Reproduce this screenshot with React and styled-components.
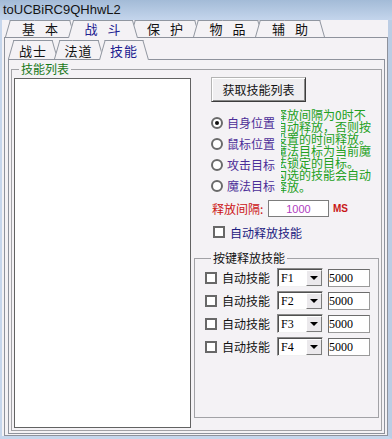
import React from 'react';
import styled, { createGlobalStyle } from 'styled-components';

const GlobalStyle = createGlobalStyle`
  html, body {
    margin: 0;
    padding: 0;
    background: #f4f2f5;
  }
  body {
    font-family: "Noto Sans CJK SC", "Liberation Sans", sans-serif;
    font-size: 12px;
  }
`;

const Window = styled.div`
  width: 392px;
  height: 439px;
  display: flex;
  flex-direction: column;
  background: #f4f2f5;
  overflow: hidden;
`;

const TitleBar = styled.div`
  flex: none;
  height: 20px;
  line-height: 20px;
  padding-left: 3px;
  background: linear-gradient(#a3bbd7, #c4d5ec);
  color: #141414;
  font-family: "Liberation Sans", sans-serif;
  font-size: 13px;
`;

const Frame = styled.div`
  flex: 1;
  min-height: 0;
  display: flex;
  flex-direction: column;
  border-left: 2px solid #c6d6ec;
  border-right: 4px solid #bccde4;
  border-bottom: 3px solid #c6d6ec;
`;

const TabStrip = styled.div`
  position: relative;
  z-index: 2;
  flex: none;
  display: flex;
  align-items: flex-end;
  height: ${p => p.$h}px;
  padding-left: ${p => p.$pad}px;
`;

const Tab = styled.div`
  position: relative;
  z-index: ${p => p.$z};
  flex: none;
  box-sizing: border-box;
  width: ${p => p.$w}px;
  height: ${p => (p.$active ? p.$h + 1 : p.$h)}px;
  margin-right: ${p => p.$overlap}px;
  margin-bottom: ${p => (p.$active ? -1 : 0)}px;
  padding-bottom: ${p => (p.$active ? 2 : 1)}px;
  display: flex;
  align-items: flex-end;
  justify-content: center;
  color: ${p => (p.$active ? '#202090' : '#111')};
  font-size: 13px;
  line-height: 14px;
  word-spacing: ${p => p.$spacing}px;
  letter-spacing: ${p => p.$tracking}px;
  white-space: pre;

  &::before,
  &::after {
    content: '';
    position: absolute;
    z-index: -1;
    top: 0;
    bottom: 0;
    width: 50%;
    background: #f4f2f5;
    border-top: 1px solid #9096a0;
  }
  &::before {
    left: 0;
    border-left: 1px solid #9096a0;
    transform: skewX(-16deg);
    transform-origin: bottom left;
  }
  &::after {
    right: 0;
    border-right: 1px solid #9096a0;
    transform: skewX(16deg);
    transform-origin: bottom right;
  }
`;

const OuterPanel = styled.div`
  flex: 1;
  min-height: 0;
  display: flex;
  flex-direction: column;
  margin-left: 2px;
  padding: 2px 2px 1px 3px;
  border: 1px solid #8e929c;
`;

const InnerPage = styled.div`
  flex: 1;
  min-height: 0;
  display: flex;
  flex-direction: column;
  padding: 2px;
  border: 1px solid #8e929c;
`;

const Group = styled.fieldset`
  margin: 0;
  min-width: 0;
  border: 1px solid #a2a2a6;
  padding: ${p => p.$padding};
  display: flex;
  flex-direction: column;
  flex: 1;
`;

const KeyGroup = styled(Group)`
  margin: 12px 2px 10px 3px;
`;

const Legend = styled.legend`
  margin-left: ${p => p.$offset}px;
  padding: 0 2px;
  font-size: 12px;
  line-height: 14px;
  color: ${p => p.$color};
`;

const GroupBody = styled.div`
  flex: 1;
  min-height: 0;
  display: flex;
`;

const ListBox = styled.div`
  flex: none;
  width: 177px;
  box-sizing: border-box;
  background: #fff;
  border: 1px solid #626262;
`;

const Side = styled.div`
  flex: 1;
  min-width: 0;
  display: flex;
  flex-direction: column;
`;

const Button = styled.div`
  align-self: flex-start;
  margin: -1px 0 0 20px;
  width: 95px;
  height: 25px;
  box-sizing: border-box;
  display: flex;
  align-items: center;
  justify-content: center;
  background: #efeef0;
  border: 1px solid;
  border-color: #b4b4b4 #3c3c3c #3c3c3c #b4b4b4;
  box-shadow: inset 1px 1px #ffffff, inset -1px -1px #8a8a8a;
  color: #111;
  font-size: 12px;
`;

const OptionArea = styled.div`
  margin: 7px 0 0 20px;
  display: grid;
  grid-template-columns: 70px 1fr;
`;

const RadioList = styled.div`
  padding-top: 3px;
`;

const RadioRow = styled.div`
  height: 21px;
  display: flex;
  align-items: center;
  gap: 4px;
  color: #4c2e98;
  white-space: nowrap;
`;

const RadioDot = styled.span`
  flex: none;
  width: 12px;
  height: 12px;
  box-sizing: border-box;
  border-radius: 50%;
  border: 2px solid #6a6a6a;
  background: #fff;
  display: flex;
  align-items: center;
  justify-content: center;

  &::after {
    content: '';
    width: 4px;
    height: 4px;
    border-radius: 50%;
    background: ${p => (p.$checked ? '#111' : 'transparent')};
  }
`;

const NoteClip = styled.div`
  overflow: hidden;
`;

const Note = styled.div`
  margin-left: -6px;
  color: #22a022;
  font-size: 12px;
  line-height: 12px;
  white-space: nowrap;
`;

const FieldRow = styled.div`
  height: ${p => p.$h}px;
  margin: ${p => p.$margin};
  display: flex;
  align-items: center;
  white-space: nowrap;
`;

const RedLabel = styled.span`
  width: 56px;
  color: #cc1414;
`;

const IntervalInput = styled.div`
  width: 61px;
  height: 17px;
  box-sizing: border-box;
  border: 1px solid #7c7c7c;
  background: #fff;
  display: flex;
  align-items: center;
  justify-content: center;
  color: #b03cc0;
  font-family: "Liberation Sans", sans-serif;
  font-size: 11px;
`;

const Unit = styled.span`
  margin-left: 4px;
  color: #c81818;
  font-family: "Liberation Sans", sans-serif;
  font-size: 10px;
  font-weight: bold;
`;

const CheckBox = styled.span`
  flex: none;
  width: 12px;
  height: 12px;
  box-sizing: border-box;
  border: 2px solid #686868;
  background: #fff;
`;

const CheckLabel = styled.span`
  margin-left: ${p => p.$gap}px;
  color: ${p => p.$color};
`;

const Combo = styled.div`
  flex: none;
  margin-left: 7px;
  width: 46px;
  height: 19px;
  box-sizing: border-box;
  display: flex;
  background: #fff;
  border: 1px solid;
  border-color: #8a8a8a #f0f0f0 #f0f0f0 #8a8a8a;
  box-shadow: inset 1px 1px #505050;
`;

const ComboText = styled.span`
  flex: 1;
  padding: 2px 0 0 3px;
  font-family: "Liberation Serif", serif;
  font-size: 12px;
  line-height: 14px;
  color: #000;
`;

const DropButton = styled.span`
  flex: none;
  width: 16px;
  margin: 1px 0 0 0;
  box-sizing: border-box;
  background: #ebe9ec;
  border: 1px solid;
  border-color: #fff #7c7c7c #7c7c7c #fff;
  display: flex;
  align-items: center;
  justify-content: center;

  &::after {
    content: '';
    border-left: 4px solid transparent;
    border-right: 4px solid transparent;
    border-top: 4px solid #000;
  }
`;

const NumberBox = styled.div`
  flex: none;
  margin-left: 5px;
  width: 42px;
  height: 18px;
  box-sizing: border-box;
  border: 1px solid;
  border-color: #6c6c6c #9a9a9a #9a9a9a #6c6c6c;
  background: #fff;
  font-family: "Liberation Serif", serif;
  font-size: 12px;
  line-height: 16px;
  color: #000;
`;

const outerTabs = ['基 本', '战 斗', '保 护', '物 品', '辅 助'];
const innerTabs = ['战士', '法道', '技能'];
const targets = ['自身位置', '鼠标位置', '攻击目标', '魔法目标'];
const noteLines = [
  '释放间隔为0时不',
  '自动释放，否则按',
  '设置的时间释放。',
  '魔法目标为当前魔',
  '法锁定的目标。',
  '勾选的技能会自动',
  '释放。',
];
const keys = ['F1', 'F2', 'F3', 'F4'];

const Tabs = ({ labels, active, w, h, overlap, pad, spacing, tracking }) => (
  <TabStrip $h={h} $pad={pad}>
    {labels.map((label, i) => (
      <Tab
        key={label}
        $w={w}
        $h={h}
        $overlap={overlap}
        $spacing={spacing}
        $tracking={tracking}
        $active={i === active}
        $z={i === active ? 20 : i + 1}
      >
        {label}
      </Tab>
    ))}
  </TabStrip>
);

export default function App() {
  return (
    <>
      <GlobalStyle />
      <Window>
        <TitleBar>toUCBiRC9QHhwL2</TitleBar>
        <Frame>
          <Tabs labels={outerTabs} active={1} w={70} h={17} overlap={-7.5} pad={3} spacing={7} tracking={0} />
          <OuterPanel>
            <Tabs labels={innerTabs} active={2} w={50} h={19} overlap={-4.5} pad={0} spacing={0} tracking={1} />
            <InnerPage>
              <Group $padding="2px 0 2px 2px">
                <Legend $offset={5} $color="#187818">技能列表</Legend>
                <GroupBody>
                  <ListBox />
                  <Side>
                    <Button>获取技能列表</Button>
                    <OptionArea>
                      <RadioList>
                        {targets.map((t, i) => (
                          <RadioRow key={t}>
                            <RadioDot $checked={i === 0} />
                            {t}
                          </RadioRow>
                        ))}
                      </RadioList>
                      <NoteClip>
                        <Note>
                          {noteLines.map(line => (
                            <div key={line}>{line}</div>
                          ))}
                        </Note>
                      </NoteClip>
                    </OptionArea>
                    <FieldRow $h={17} $margin="4px 0 0 21px">
                      <RedLabel>释放间隔:</RedLabel>
                      <IntervalInput>1000</IntervalInput>
                      <Unit>MS</Unit>
                    </FieldRow>
                    <FieldRow $h={14} $margin="8px 0 0 22px">
                      <CheckBox />
                      <CheckLabel $gap={5} $color="#1c2080">自动释放技能</CheckLabel>
                    </FieldRow>
                    <KeyGroup $padding="1px 0 0 10px">
                      <Legend $offset={6} $color="#111">按键释放技能</Legend>
                      {keys.map(k => (
                        <FieldRow key={k} $h={23} $margin="0">
                          <CheckBox />
                          <CheckLabel $gap={5} $color="#111">自动技能</CheckLabel>
                          <Combo>
                            <ComboText>{k}</ComboText>
                            <DropButton />
                          </Combo>
                          <NumberBox>5000</NumberBox>
                        </FieldRow>
                      ))}
                    </KeyGroup>
                  </Side>
                </GroupBody>
              </Group>
            </InnerPage>
          </OuterPanel>
        </Frame>
      </Window>
    </>
  );
}
